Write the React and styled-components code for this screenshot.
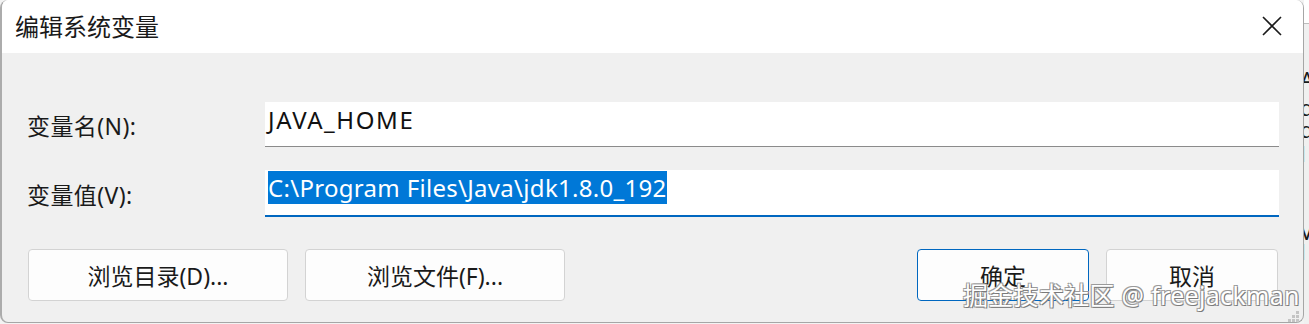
import React from "react";
import styled, { createGlobalStyle } from "styled-components";

const GlobalStyle = createGlobalStyle`
  html, body {
    margin: 0;
    padding: 0;
    background: #e8e8e8;
  }
  body {
    font-family: "Noto Sans", "Noto Sans CJK SC", sans-serif;
    overflow: hidden;
  }
`;

const FONT = `"Noto Sans", "Noto Sans CJK SC", sans-serif`;

const App = () => {
  return (
    <Screen>
      <GlobalStyle />
      <Dialog>
        <TitleBar>
          <Title>编辑系统变量</Title>
          <CloseButton>
            <svg width="20" height="20" viewBox="0 0 20 20">
              <path d="M1 1 L19 19 M19 1 L1 19" stroke="#1b1b1b" strokeWidth="1.6" fill="none" />
            </svg>
          </CloseButton>
        </TitleBar>
        <Body>
          <Fields>
            <Label>变量名(N):</Label>
            <Field>
              <FieldText $spacing={1.6}>JAVA_HOME</FieldText>
            </Field>
            <Label>变量值(V):</Label>
            <Field $focused>
              <FieldText $spacing={0.3}>
                <Selected>C:\Program Files\Java\jdk1.8.0_192</Selected>
              </FieldText>
            </Field>
          </Fields>
          <ButtonRow>
            <ButtonGroup>
              <Button $wide>浏览目录(D)...</Button>
              <Button $wide>浏览文件(F)...</Button>
            </ButtonGroup>
            <ButtonGroup>
              <Button $primary>确定</Button>
              <Button>取消</Button>
            </ButtonGroup>
          </ButtonRow>
          <Grip>
            <svg width="16" height="12" viewBox="0 0 16 12">
              <rect x="12" y="0" width="3" height="3" fill="#c4c4c4" />
              <rect x="8" y="4" width="3" height="3" fill="#c4c4c4" />
              <rect x="12" y="4" width="3" height="3" fill="#c4c4c4" />
              <rect x="4" y="8" width="3" height="3" fill="#c4c4c4" />
              <rect x="8" y="8" width="3" height="3" fill="#c4c4c4" />
              <rect x="12" y="8" width="3" height="3" fill="#c4c4c4" />
            </svg>
          </Grip>
        </Body>
        <Watermark>掘金技术社区 @ freejackman</Watermark>
      </Dialog>
      <BackWindow>
        <BackTop />
        <BackLines>
          <BackGlyph $top={50}>A</BackGlyph>
          <BackGlyph $top={12}>d</BackGlyph>
          <BackGlyph $top={6}>d</BackGlyph>
          <BackGlyph $top={8}>l</BackGlyph>
          <BackGlyph $top={62}>V</BackGlyph>
          <BackGlyph $top={4}>l</BackGlyph>
        </BackLines>
      </BackWindow>
    </Screen>
  );
};

const Screen = styled.div`
  width: 1309px;
  height: 324px;
  display: flex;
  overflow: hidden;
  background: #f3f3f3;
`;

const Dialog = styled.div`
  position: relative;
  width: 1304px;
  height: 323px;
  flex-shrink: 0;
  display: flex;
  flex-direction: column;
  box-sizing: border-box;
  border-left: 2px solid #acacac;
  border-right: 1px solid #a6a6a6;
  border-bottom: 1px solid #a6a6a6;
  border-radius: 8px;
  overflow: hidden;
  background: #f0f0f0;
`;

const TitleBar = styled.div`
  height: 53px;
  flex-shrink: 0;
  display: flex;
  align-items: center;
  justify-content: space-between;
  background: #ffffff;
  padding: 0 21px 0 13px;
`;

const Title = styled.div`
  font-family: "Noto Sans CJK SC", sans-serif;
  font-size: 24px;
  color: #1a1a1a;
  margin-top: -3px;
`;

const CloseButton = styled.div`
  width: 20px;
  height: 20px;
  display: flex;
  margin-top: -2px;
`;

const Body = styled.div`
  flex: 1;
  position: relative;
  display: flex;
  flex-direction: column;
  padding: 49px 24px 0 25px;
`;

const Fields = styled.div`
  display: grid;
  grid-template-columns: 238px 1fr;
  row-gap: 23px;
  align-items: center;
`;

const Label = styled.div`
  font-family: ${FONT};
  font-size: 23px;
  letter-spacing: 0.4px;
  color: #1a1a1a;
`;

const Field = styled.div`
  background: #ffffff;
  border-bottom: ${(p) => (p.$focused ? "2px solid #0067c0" : "1px solid #8b8b8b")};
  padding: 3px 3px 0;
  height: ${(p) => (p.$focused ? "42px" : "41px")};
`;

const FieldText = styled.div`
  font-family: ${FONT};
  font-size: 24px;
  line-height: 30px;
  letter-spacing: ${(p) => p.$spacing || 0}px;
  color: #111111;
  white-space: nowrap;
`;

const Selected = styled.span`
  background: #0078d7;
  color: #ffffff;
`;

const ButtonRow = styled.div`
  display: flex;
  justify-content: space-between;
  margin-top: 32px;
  padding: 0 1px 0 1px;
`;

const ButtonGroup = styled.div`
  display: flex;
  gap: 17px;
`;

const Button = styled.div`
  width: ${(p) => (p.$wide ? "260px" : "172px")};
  height: 52px;
  box-sizing: border-box;
  display: flex;
  align-items: center;
  justify-content: center;
  background: #fdfdfd;
  border: 1px solid ${(p) => (p.$primary ? "#0067c0" : "#d3d3d3")};
  border-radius: 4px;
  font-family: ${FONT};
  font-size: 23px;
  color: #1a1a1a;
`;

const Grip = styled.div`
  position: absolute;
  right: 3px;
  bottom: -1px;
  display: flex;
`;

const Watermark = styled.div`
  position: absolute;
  left: 961px;
  top: 276px;
  font-family: ${FONT};
  font-size: 25px;
  letter-spacing: 0.3px;
  color: #ffffff;
  white-space: nowrap;
  text-shadow:
    1px 1px 0 #7a7a7a,
    -1px 1px 0 #9a9a9a,
    1px -1px 0 #9a9a9a,
    -1px -1px 0 #a0a0a0;
`;

const BackWindow = styled.div`
  flex: 1;
  display: flex;
  flex-direction: column;
  background: #f0f0f0;
  overflow: hidden;
`;

const BackTop = styled.div`
  height: 23px;
  background: #ffffff;
  border-bottom: 1px solid #bdbdbd;
`;

const BackLines = styled.div`
  display: flex;
  flex-direction: column;
`;

const BackGlyph = styled.div`
  margin-top: ${(p) => p.$top - 6}px;
  margin-left: -4px;
  font-family: ${FONT};
  font-size: 22px;
  line-height: 22px;
  color: #1a1a1a;
`;

export default App;
